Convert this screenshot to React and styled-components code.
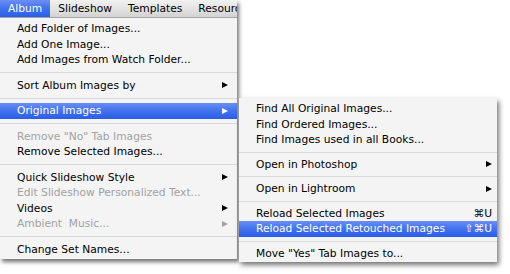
import React from 'react';
import styled, { createGlobalStyle, css } from 'styled-components';

const GlobalStyle = createGlobalStyle`
  html, body {
    margin: 0;
    padding: 0;
    background: #fff;
  }
  body {
    font-family: "DejaVu Sans", "Liberation Sans", sans-serif;
    -webkit-font-smoothing: antialiased;
  }
`;

const highlight = css`
  background: linear-gradient(180deg, #6a8ff4 0%, #4474f0 45%, #2a5de9 100%);
  color: #fff;
`;

const Stage = styled.div`
  position: relative;
  width: 510px;
  height: 274px;
  overflow: hidden;
  background: #fff;
`;

const Shot = styled.div`
  width: 237px;
  display: flex;
  flex-direction: column;
  box-shadow: 2px 3px 4px rgba(0, 0, 0, 0.55);
`;

const MenuBar = styled.div`
  height: 17px;
  display: flex;
  overflow: hidden;
  background: linear-gradient(180deg, #f1f1f1 0%, #e2e2e2 55%, #d2d2d2 100%);
  border-bottom: 1px solid #a4a4a4;
`;

const MenuTitle = styled.div`
  padding: 0 8px;
  line-height: 17px;
  font-size: 10.7px;
  color: #000;
  white-space: nowrap;
  ${({ $active }) => $active && highlight}
`;

const Menu = styled.div`
  display: flex;
  flex-direction: column;
  padding: 3px 0 2px;
  background: #f4f4f4;
`;

const SubMenu = styled(Menu)`
  position: absolute;
  left: 239px;
  top: 98px;
  width: 258px;
  padding-bottom: 1px;
  box-shadow: 2px 3px 5px rgba(0, 0, 0, 0.55);
`;

const Item = styled.div`
  height: 15.5px;
  display: flex;
  align-items: center;
  padding: 0 ${({ $right }) => $right}px 0 17px;
  font-size: 10.7px;
  color: ${({ $disabled }) => ($disabled ? '#a2a2a2' : '#000')};
  white-space: pre;
  ${({ $active }) => $active && highlight}
`;

const Label = styled.span`
  flex: 1;
`;

const Shortcut = styled.span`
  font-size: 10.7px;
`;

const Arrow = styled.span`
  width: 0;
  height: 0;
  border-top: 3.5px solid transparent;
  border-bottom: 3.5px solid transparent;
  border-left: 6px solid currentColor;
`;

const Separator = styled.div`
  height: ${({ $h }) => $h}px;
  display: flex;
  align-items: center;

  &::after {
    content: '';
    flex: 1;
    height: 1px;
    background: #d9d9d9;
  }
`;

const titles = ['Album', 'Slideshow', 'Templates', 'Resources'];

const albumItems = [
  { label: 'Add Folder of Images...' },
  { label: 'Add One Image...' },
  { label: 'Add Images from Watch Folder...' },
  'sep',
  { label: 'Sort Album Images by', sub: true },
  'sep',
  { label: 'Original Images', sub: true, active: true },
  'sep',
  { label: 'Remove "No" Tab Images', disabled: true },
  { label: 'Remove Selected Images...' },
  'sep',
  { label: 'Quick Slideshow Style', sub: true },
  { label: 'Edit Slideshow Personalized Text...', disabled: true },
  { label: 'Videos', sub: true },
  { label: 'Ambient  Music...', sub: true, disabled: true },
  'sep',
  { label: 'Change Set Names...' },
];

const originalItems = [
  { label: 'Find All Original Images...' },
  { label: 'Find Ordered Images...' },
  { label: 'Find Images used in all Books...' },
  'sep',
  { label: 'Open in Photoshop', sub: true },
  'sep',
  { label: 'Open in Lightroom', sub: true },
  'sep',
  { label: 'Reload Selected Images', key: '\u2318U' },
  { label: 'Reload Selected Retouched Images', key: '\u21E7\u2318U', active: true },
  'sep',
  { label: 'Move "Yes" Tab Images to...' },
];

function MenuItems({ items, right, sep }) {
  return items.map((item, i) =>
    item === 'sep' ? (
      <Separator key={i} $h={sep} />
    ) : (
      <Item key={i} $right={right} $disabled={item.disabled} $active={item.active}>
        <Label>{item.label}</Label>
        {item.key && <Shortcut>{item.key}</Shortcut>}
        {item.sub && <Arrow />}
      </Item>
    )
  );
}

export default function App() {
  return (
    <Stage>
      <GlobalStyle />
      <Shot>
        <MenuBar>
          {titles.map((t, i) => (
            <MenuTitle key={t} $active={i === 0}>
              {t}
            </MenuTitle>
          ))}
        </MenuBar>
        <Menu>
          <MenuItems items={albumItems} right={9} sep={10} />
        </Menu>
      </Shot>
      <SubMenu>
        <MenuItems items={originalItems} right={5} sep={9} />
      </SubMenu>
    </Stage>
  );
}
